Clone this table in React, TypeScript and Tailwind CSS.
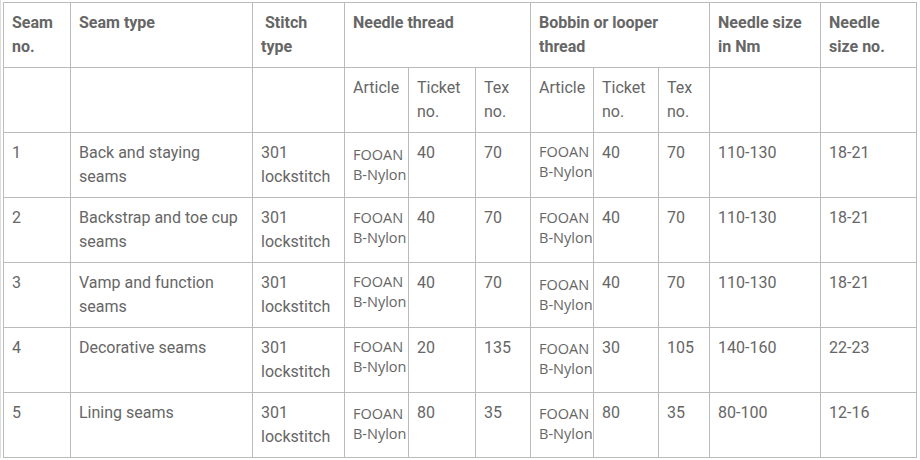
const cols = [67, 182, 92, 64, 67, 55, 63, 65, 51, 111, 96];

type Row = {
  no: string;
  type: string;
  nTicket: string;
  nTex: string;
  bTicket: string;
  bTex: string;
  nm: string;
  size: string;
  artL: string;
  artR: string;
};

// article cells sit a bit lower/higher per row in the source page
const rows: Row[] = [
  { no: "1", type: "Back and staying seams", nTicket: "40", nTex: "70", bTicket: "40", bTex: "70", nm: "110-130", size: "18-21", artL: "pt-[12px]", artR: "pt-[9px]" },
  { no: "2", type: "Backstrap and toe cup seams", nTicket: "40", nTex: "70", bTicket: "40", bTex: "70", nm: "110-130", size: "18-21", artL: "pt-[10px]", artR: "pt-[10px]" },
  { no: "3", type: "Vamp and function seams", nTicket: "40", nTex: "70", bTicket: "40", bTex: "70", nm: "110-130", size: "18-21", artL: "pt-[9px]", artR: "pt-[12px]" },
  { no: "4", type: "Decorative seams", nTicket: "20", nTex: "135", bTicket: "30", bTex: "105", nm: "140-160", size: "22-23", artL: "pt-[9px]", artR: "pt-[11px]" },
  { no: "5", type: "Lining seams", nTicket: "80", nTex: "35", bTicket: "80", bTex: "35", nm: "80-100", size: "12-16", artL: "pt-[11px]", artR: "pt-[11px]" },
];

const cell = "border border-[#bbb] align-top px-2 pt-2 pb-2 leading-6";
const head = cell + " font-bold";

function Article({ pad }: { pad: string }) {
  return (
    <td className={"border border-[#bbb] align-top pl-2 pr-0 pb-2 " + pad}>
      <div className="whitespace-nowrap text-[14.5px] leading-5 text-[#666]" style={{ fontFamily: '"Open Sans", sans-serif' }}>
        <div>FOOAN</div>
        <div>B-Nylon</div>
      </div>
    </td>
  );
}

export default function App() {
  return (
    <div className="w-[920px] h-[460px] bg-white overflow-hidden">
      <div className="border-l border-[#ddd] pl-[2px] pt-[2px]">
        <table
          className="table-fixed border-collapse w-[914px] text-[16px] text-[#666]"
          style={{ fontFamily: "Roboto, sans-serif" }}
        >
          <colgroup>
            {cols.map((w, i) => (
              <col key={i} style={{ width: w }} />
            ))}
          </colgroup>
          <thead>
            <tr>
              <th className={head + " text-left"}>Seam no.</th>
              <th className={head + " text-left"}>Seam type</th>
              <th className={head + " text-left"}>&nbsp;Stitch type</th>
              <th className={head + " text-left"} colSpan={3}>Needle thread</th>
              <th className={head + " text-left"} colSpan={3}>Bobbin or looper thread</th>
              <th className={head + " text-left"}>Needle size in Nm</th>
              <th className={head + " text-left"}>Needle size no.</th>
            </tr>
            <tr>
              <td className={cell}></td>
              <td className={cell}></td>
              <td className={cell}></td>
              <td className={cell}>Article</td>
              <td className={cell}>Ticket no.</td>
              <td className={cell}>Tex no.</td>
              <td className={cell}>Article</td>
              <td className={cell}>Ticket no.</td>
              <td className={cell}>Tex no.</td>
              <td className={cell}>&nbsp;<br />&nbsp;</td>
              <td className={cell}></td>
            </tr>
          </thead>
          <tbody>
            {rows.map((r) => (
              <tr key={r.no}>
                <td className={cell}>{r.no}</td>
                <td className={cell}>{r.type}</td>
                <td className={cell}>301 lockstitch</td>
                <Article pad={r.artL} />
                <td className={cell}>{r.nTicket}</td>
                <td className={cell}>{r.nTex}</td>
                <Article pad={r.artR} />
                <td className={cell}>{r.bTicket}</td>
                <td className={cell}>{r.bTex}</td>
                <td className={cell}>{r.nm}</td>
                <td className={cell}>{r.size}</td>
              </tr>
            ))}
          </tbody>
        </table>
      </div>
    </div>
  );
}
